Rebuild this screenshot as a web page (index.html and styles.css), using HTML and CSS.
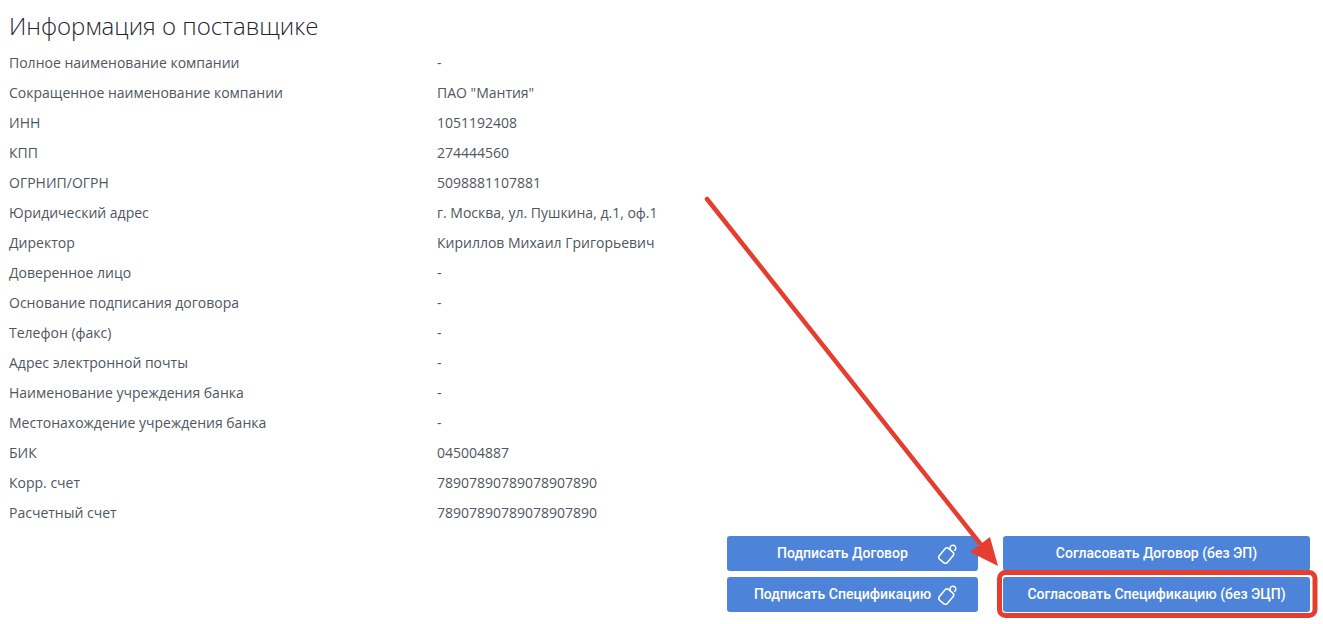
FILE: index.html
```html
<!DOCTYPE html>
<html lang="ru">
<head>
<meta charset="utf-8">
<title>Информация о поставщике</title>
<link rel="stylesheet" href="styles.css">
</head>
<body>
<main class="page">
  <h1 class="title">Информация о поставщике</h1>
  <dl class="info">
    <div class="row"><dt>Полное наименование компании</dt><dd>-</dd></div>
    <div class="row"><dt>Сокращенное наименование компании</dt><dd>ПАО "Мантия"</dd></div>
    <div class="row"><dt>ИНН</dt><dd>1051192408</dd></div>
    <div class="row"><dt>КПП</dt><dd>274444560</dd></div>
    <div class="row"><dt>ОГРНИП/ОГРН</dt><dd>5098881107881</dd></div>
    <div class="row"><dt>Юридический адрес</dt><dd>г. Москва, ул. Пушкина, д.1, оф.1</dd></div>
    <div class="row"><dt>Директор</dt><dd>Кириллов Михаил Григорьевич</dd></div>
    <div class="row"><dt>Доверенное лицо</dt><dd>-</dd></div>
    <div class="row"><dt>Основание подписания договора</dt><dd>-</dd></div>
    <div class="row"><dt>Телефон (факс)</dt><dd>-</dd></div>
    <div class="row"><dt>Адрес электронной почты</dt><dd>-</dd></div>
    <div class="row"><dt>Наименование учреждения банка</dt><dd>-</dd></div>
    <div class="row"><dt>Местонахождение учреждения банка</dt><dd>-</dd></div>
    <div class="row"><dt>БИК</dt><dd>045004887</dd></div>
    <div class="row"><dt>Корр. счет</dt><dd>78907890789078907890</dd></div>
    <div class="row"><dt>Расчетный счет</dt><dd>78907890789078907890</dd></div>
  </dl>
  <div class="actions">
    <button class="btn btn-sign" type="button"><span class="btn-label">Подписать Договор</span><svg class="token" viewBox="0 0 20 20" width="20" height="20"><use href="#token-icon"/></svg></button>
    <button class="btn btn-agree" type="button">Согласовать Договор (без ЭП)</button>
    <button class="btn btn-sign" type="button"><span class="btn-label">Подписать Спецификацию</span><svg class="token" viewBox="0 0 20 20" width="20" height="20"><use href="#token-icon"/></svg></button>
    <button class="btn btn-agree" type="button">Согласовать Спецификацию (без ЭЦП)</button>
  </div>
</main>
<svg class="annotation" width="1323" height="624" viewBox="0 0 1323 624" aria-hidden="true">
  <defs>
    <g id="token-icon" fill="none" stroke="#fff" stroke-width="1.5">
      <rect x="2.9" y="4.6" width="10.6" height="14" rx="2.8" transform="rotate(40 8.2 11.6)"/>
      <path d="M12.4 5.6 A2.9 2.9 0 1 1 16.2 6.7"/>
    </g>
  </defs>
  <line x1="707" y1="199" x2="982" y2="546" stroke="#e53e30" stroke-width="4.5" stroke-linecap="round"/>
  <polygon points="998,566 970,552 990,537" fill="#e53e30"/>
  <rect x="999.5" y="572.5" width="315.5" height="43" rx="6" fill="none" stroke="#e53e30" stroke-width="5"/>
</svg>
</body>
</html>
```
FILE: styles.css
```css
* { box-sizing: border-box; }
html, body { margin: 0; padding: 0; background: #fff; }
body { position: relative; height: 624px; overflow: hidden; font-family: "Open Sans", sans-serif; color: #4f5660; }
.page { padding-left: 9px; }
.title { margin: 0; height: 48px; padding-top: 8px; font-size: 24px; line-height: 36px; font-weight: 300; color: #1f2630; white-space: nowrap; }
.info { margin: 0; }
.row { display: flex; height: 30px; align-items: center; font-size: 14px; line-height: 30px; }
.row dt { width: 428px; flex: none; }
.row dd { margin: 0; }
.actions { display: grid; grid-template-columns: 251px 307px; grid-auto-rows: 35px; column-gap: 25px; row-gap: 6px; margin: 8px 0 0 718px; }
.btn { display: flex; align-items: center; justify-content: center; border: 0; padding: 0 0 2px; border-radius: 3px; background: #4d84d9; color: #fff; font-family: Roboto, sans-serif; font-size: 14px; font-weight: 500; white-space: nowrap; }
.btn-sign { position: relative; }
.btn-label { display: block; width: 100%; padding-right: 26px; padding-left: 6px; text-align: center; }
.token { position: absolute; right: 20px; top: 8px; }
.annotation { position: absolute; left: 0; top: 0; pointer-events: none; }
```
